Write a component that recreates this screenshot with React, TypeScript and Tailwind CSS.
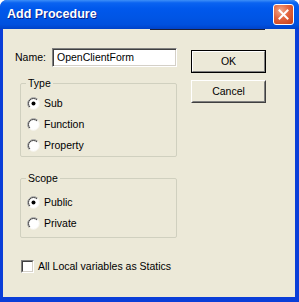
import { ReactNode } from 'react';

const Radio = ({ checked, label }: { checked?: boolean; label: string }) => (
  <div className="flex items-center gap-[4px] h-[21px]">
    <svg width="13" height="13" viewBox="0 0 13 13" className="shrink-0">
      <circle cx="6.5" cy="6.5" r="6" fill="#ffffff" />
      <path d="M2.26 10.74 A6 6 0 0 1 10.74 2.26" fill="none" stroke="#9a9a9a" strokeWidth="1" />
      <path d="M2.96 10.04 A5 5 0 0 1 10.04 2.96" fill="none" stroke="#404040" strokeWidth="1" />
      <path d="M10.74 2.26 A6 6 0 0 1 2.26 10.74" fill="none" stroke="#f4f2ea" strokeWidth="1" />
      {checked && <circle cx="6.5" cy="6.5" r="2" fill="#000000" />}
    </svg>
    <span>{label}</span>
  </div>
);

const Group = ({ title, className, children }: { title: string; className?: string; children: ReactNode }) => (
  <fieldset className={`ml-[5px] w-[157px] border border-[#D0D0BF] rounded-[2px] ${className ?? ''}`}>
    <legend className="ml-[5px] px-[2px] leading-[13px]">{title}</legend>
    {children}
  </fieldset>
);

const Button = ({ label, isDefault }: { label: string; isDefault?: boolean }) => (
  <button
    className={`w-[75px] h-[23px] flex ${isDefault ? 'border border-black' : 'border border-t-white border-l-white border-b-[#404040] border-r-[#404040]'}`}
  >
    <span
      className={`flex-1 flex items-center justify-center bg-[#ECE9D8] border ${
        isDefault
          ? 'border-t-white border-l-white border-b-[#808080] border-r-[#808080]'
          : 'border-t-[#ECE9D8] border-l-[#ECE9D8] border-b-[#808080] border-r-[#808080]'
      }`}
    >
      {label}
    </span>
  </button>
);

export default function App() {
  return (
    <div className="w-[299px] h-[302px] flex flex-col bg-[#0A3ED8] rounded-t-[7px] overflow-hidden text-[10.5px] text-black font-['Liberation_Sans',Arial,sans-serif]">
      {/* title bar */}
      <div className="h-[29px] shrink-0 flex items-center justify-between pl-[7px] pr-[5px] bg-[linear-gradient(to_bottom,#3D8FF8_0%,#0A63F1_10%,#0058EC_30%,#0055E5_60%,#0050DE_85%,#0042C8_100%)]">
        <span className="text-white font-bold text-[12.5px] [text-shadow:1px_1px_0_#0A1E8A]">Add Procedure</span>
        <div className="w-[21px] h-[21px] rounded-[3px] border border-white flex items-center justify-center bg-[radial-gradient(circle_at_35%_30%,#F2A88A_0%,#E2643E_45%,#C63C14_100%)]">
          <svg width="11" height="11" viewBox="0 0 11 11">
            <path d="M1.5 1.5 L9.5 9.5 M9.5 1.5 L1.5 9.5" stroke="#ffffff" strokeWidth="2" strokeLinecap="square" />
          </svg>
        </div>
      </div>

      {/* body */}
      <div className="flex-1 flex flex-col ml-[3px] mr-[4px] mb-[5px] bg-[#ECE9D8]">
        <div className="h-px shrink-0">
          <div className="ml-[147px] w-[115px] h-px bg-[#1B1F3A]" />
        </div>
        <div className="flex flex-row">
          <div className="pl-[12px] pt-[18px] flex flex-col w-[174px]">
            <div className="flex items-center h-[19px]">
              <span className="w-[37px]">Name:</span>
              <div className="w-[125px] h-[19px] bg-white border border-t-[#808080] border-l-[#808080] border-b-white border-r-white shadow-[inset_1px_1px_0_#404040,inset_-1px_-1px_0_#D4D0C8] flex items-center pl-[4px]">
                OpenClientForm
              </div>
            </div>

            <Group title="Type" className="mt-[10px]">
              <div className="pl-[6px] pt-[3px]">
                <Radio checked label="Sub" />
                <Radio label="Function" />
                <Radio label="Property" />
              </div>
            </Group>

            <Group title="Scope" className="mt-[15px]">
              <div className="pl-[6px] pt-[7px] pb-[3px]">
                <Radio checked label="Public" />
                <Radio label="Private" />
              </div>
            </Group>

            <div className="mt-[22px] ml-[6px] flex items-center gap-[4px] h-[13px]">
              <div className="w-[13px] h-[13px] border border-t-[#808080] border-l-[#808080] border-b-white border-r-white shrink-0">
                <div className="w-full h-full bg-white border border-t-[#404040] border-l-[#404040] border-b-[#D4D0C8] border-r-[#D4D0C8]" />
              </div>
              <span>All Local variables as Statics</span>
            </div>
          </div>

          <div className="ml-[14px] pt-[20px] flex flex-col gap-[7px]">
            <Button label="OK" isDefault />
            <Button label="Cancel" />
          </div>
        </div>
      </div>
    </div>
  );
}
